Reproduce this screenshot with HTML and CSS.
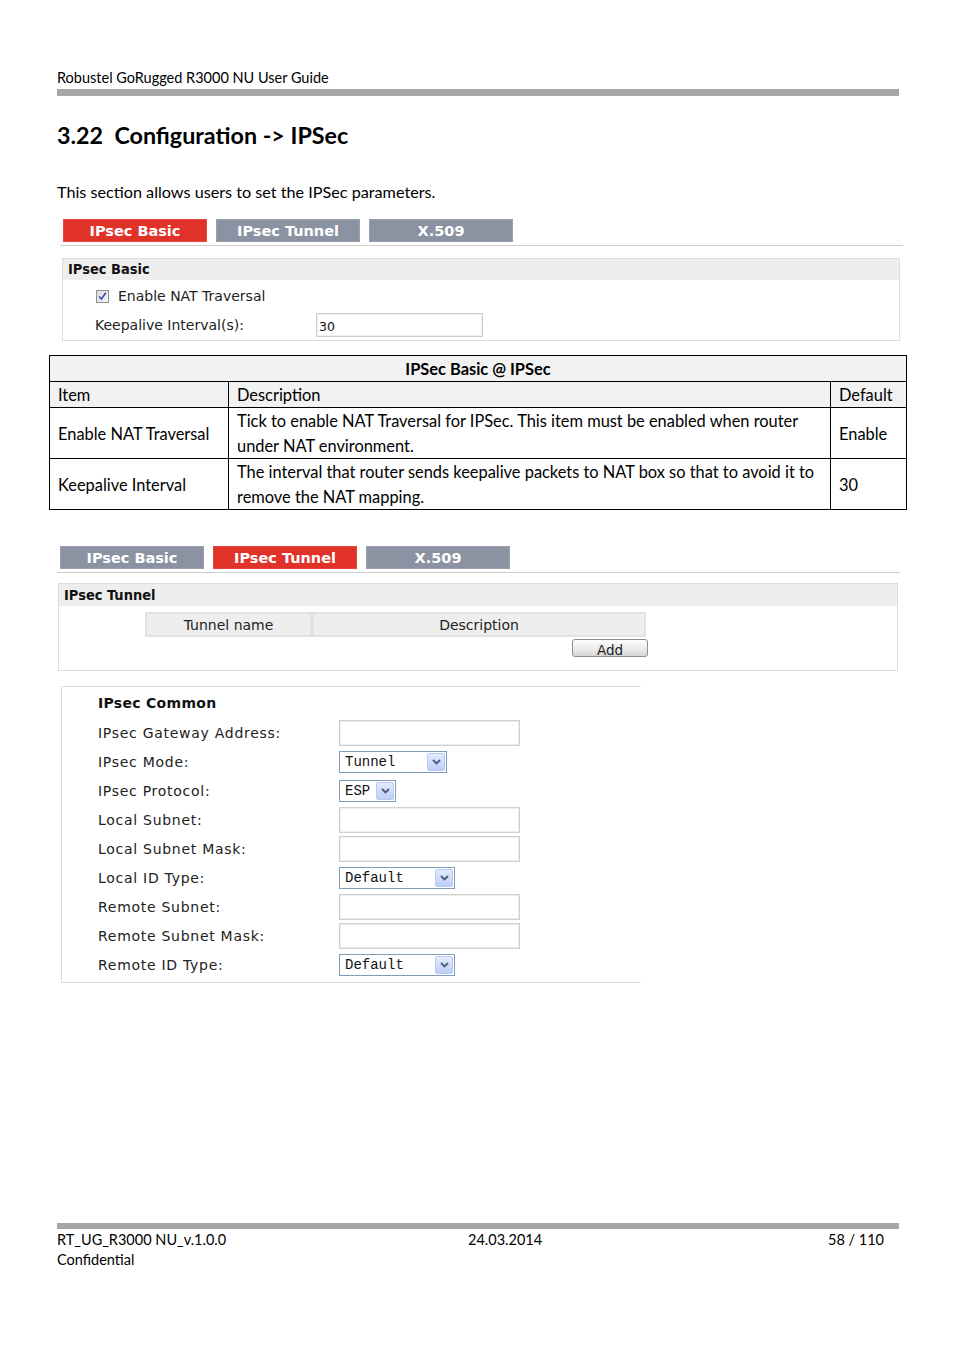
FILE: index.html
```html
<!DOCTYPE html>
<html>
<head>
<meta charset="utf-8">
<title>Configuration -> IPSec</title>
<link rel="stylesheet" href="styles.css">
</head>
<body>
<div class="page">
  <div class="running-head">Robustel GoRugged R3000 NU User Guide</div>
  <div class="rule"></div>
  <h1 class="title">3.22&nbsp;&nbsp;Configuration -&gt; IPSec</h1>
  <p class="intro">This section allows users to set the IPSec parameters.</p>

  <div class="shot shot1">
    <div class="tabs">
      <div class="tab active">IPsec Basic</div>
      <div class="tab">IPsec Tunnel</div>
      <div class="tab">X.509</div>
    </div>
    <div class="tab-line"></div>
    <div class="panel">
      <div class="panel-head">IPsec Basic</div>
      <div class="pb-row check-row">
        <svg class="checkbox" width="13" height="13" viewBox="0 0 13 13">
          <defs>
            <linearGradient id="cbg" x1="0" y1="0" x2="1" y2="1">
              <stop offset="0" stop-color="#d9d9d9"/>
              <stop offset="1" stop-color="#f7f7f7"/>
            </linearGradient>
          </defs>
          <rect x="0.5" y="0.5" width="12" height="12" fill="url(#cbg)" stroke="#8f8f8f"/>
          <path d="M3.2 6.4 L5.4 9 L9.8 2.8" fill="none" stroke="#2f4fb0" stroke-width="1.6"/>
        </svg>
        <span>Enable NAT Traversal</span>
      </div>
      <div class="pb-row keep-row">
        <span class="pb-label">Keepalive Interval(s):</span>
        <span class="text-input value">30</span>
      </div>
    </div>
  </div>

  <table class="spec">
    <colgroup>
      <col class="c1"><col class="c2"><col class="c3">
    </colgroup>
    <tr class="spec-title"><th colspan="3">IPSec Basic @ IPSec</th></tr>
    <tr class="spec-head"><td>Item</td><td>Description</td><td>Default</td></tr>
    <tr class="spec-row"><td>Enable NAT Traversal</td><td>Tick to enable NAT Traversal for IPSec. This item must be enabled when router<br>under NAT environment.</td><td>Enable</td></tr>
    <tr class="spec-row"><td>Keepalive Interval</td><td>The interval that router sends keepalive packets to NAT box so that to avoid it to<br>remove the NAT mapping.</td><td>30</td></tr>
  </table>

  <div class="shot shot2">
    <div class="tabs">
      <div class="tab">IPsec Basic</div>
      <div class="tab active">IPsec Tunnel</div>
      <div class="tab">X.509</div>
    </div>
    <div class="tab-line"></div>
    <div class="panel">
      <div class="panel-head">IPsec Tunnel</div>
      <div class="tunnel-table">
        <div class="tt-cell tt-name">Tunnel name</div>
        <div class="tt-cell tt-desc">Description</div>
      </div>
      <div class="add-row"><span class="add-btn">Add</span></div>
    </div>

    <div class="common">
      <div class="common-head">IPsec Common</div>
      <div class="c-row"><span class="c-label">IPsec Gateway Address:</span><span class="text-input"></span></div>
      <div class="c-row"><span class="c-label">IPsec Mode:</span><span class="sel w-tunnel"><span class="sel-val">Tunnel</span><span class="sel-btn"><svg width="9" height="6" viewBox="0 0 9 6"><path d="M1 1 L4.5 4.5 L8 1" fill="none" stroke="#4a5c80" stroke-width="1.8"/></svg></span></span></div>
      <div class="c-row"><span class="c-label">IPsec Protocol:</span><span class="sel w-esp"><span class="sel-val">ESP</span><span class="sel-btn"><svg width="9" height="6" viewBox="0 0 9 6"><path d="M1 1 L4.5 4.5 L8 1" fill="none" stroke="#4a5c80" stroke-width="1.8"/></svg></span></span></div>
      <div class="c-row"><span class="c-label">Local Subnet:</span><span class="text-input"></span></div>
      <div class="c-row"><span class="c-label">Local Subnet Mask:</span><span class="text-input"></span></div>
      <div class="c-row"><span class="c-label">Local ID Type:</span><span class="sel w-default"><span class="sel-val">Default</span><span class="sel-btn"><svg width="9" height="6" viewBox="0 0 9 6"><path d="M1 1 L4.5 4.5 L8 1" fill="none" stroke="#4a5c80" stroke-width="1.8"/></svg></span></span></div>
      <div class="c-row"><span class="c-label">Remote Subnet:</span><span class="text-input"></span></div>
      <div class="c-row"><span class="c-label">Remote Subnet Mask:</span><span class="text-input"></span></div>
      <div class="c-row"><span class="c-label">Remote ID Type:</span><span class="sel w-default"><span class="sel-val">Default</span><span class="sel-btn"><svg width="9" height="6" viewBox="0 0 9 6"><path d="M1 1 L4.5 4.5 L8 1" fill="none" stroke="#4a5c80" stroke-width="1.8"/></svg></span></span></div>
    </div>
  </div>

  <div class="footer">
    <div class="rule"></div>
    <div class="foot-grid">
      <span>RT_UG_R3000 NU_v.1.0.0</span>
      <span>24.03.2014</span>
      <span class="page-no">58 / 110</span>
      <span>Confidential</span>
    </div>
  </div>
</div>
</body>
</html>
```

FILE: styles.css
```css
* { box-sizing: border-box; }

body {
  margin: 0;
  background: #ffffff;
  color: #000000;
  font-family: Lato, "Liberation Sans", sans-serif;
}

.page {
  width: 954px;
  height: 1350px;
  padding: 0 55px 0 57px;
  display: flex;
  flex-direction: column;
}

.running-head {
  margin-top: 69px;
  font-size: 14.5px;
  line-height: 18px;
}

.rule {
  height: 7px;
  background: #a6a6a6;
  margin-top: 2px;
}

.title {
  margin: 24px 0 0;
  font-size: 23.3px;
  line-height: 30px;
  font-weight: 700;
}

.intro {
  margin: 32px 0 0;
  font-size: 16.2px;
  line-height: 20px;
}

/* ---------- UI screenshots ---------- */
.shot {
  font-family: "DejaVu Sans", Verdana, sans-serif;
  color: #111;
}

.shot1 { margin-top: 17px; }

.tabs {
  display: flex;
  gap: 9px;
  margin-left: 6px;
}

.shot2 .tabs { margin-left: 3px; gap: 9px; }

.tab {
  width: 144px;
  height: 23px;
  line-height: 22px;
  text-align: center;
  background: #8b93a3;
  color: #ffffff;
  font-weight: 700;
  font-size: 14.5px;
  border: 1px solid #9aa1ae;
}

.tab.active {
  background: #e1322a;
  border-color: #e8473f;
}

.tab-line {
  height: 1px;
  background: #cccccc;
  margin: 3px -4px 0 3px;
}

.shot2 .tab-line { margin: 3px -1px 0 0; }

.panel {
  margin: 12px -1px 0 5px;
  border: 1px solid #dddddd;
}

.shot2 .panel { margin: 10px 1px 0 1px; }

.panel-head {
  background: #eeeeee;
  height: 21px;
  line-height: 21px;
  padding-left: 5px;
  font-family: "DejaVu Sans Condensed", "DejaVu Sans", sans-serif;
  font-weight: 700;
  font-size: 14.5px;
  color: #111;
}

.shot2 .panel-head { height: 22px; line-height: 22px; }

.pb-row {
  display: flex;
  align-items: center;
  padding-left: 32px;
  font-size: 14px;
  color: #222;
}

.check-row { padding-left: 33px; height: 32px; }
.check-row span { margin-left: 9px; }

.keep-row { height: 26px; margin-bottom: 2px; }

.pb-label { width: 221px; }

.text-input {
  display: inline-block;
  width: 167px;
  height: 24px;
  border: 1px solid #cfcfcf;
  box-shadow: inset 0 0 0 1px #eeeeee;
  background: #fff;
}

.text-input.value {
  font-size: 12.5px;
  line-height: 24px;
  padding-left: 2px;
  padding-top: 1px;
  color: #111;
}

/* ---------- spec table ---------- */
.spec {
  margin: 14px 0 0 -8px;
  width: 857px;
  border-collapse: collapse;
  font-family: Lato, "Liberation Sans", sans-serif;
  font-size: 16.4px;
  table-layout: fixed;
}

.spec .c1 { width: 179px; }
.spec .c2 { width: 602px; }
.spec .c3 { width: 76px; }

.spec th,
.spec td {
  border: 1px solid #000;
  padding: 0 8px;
  text-align: left;
  vertical-align: middle;
  white-space: nowrap;
}

.spec-title th {
  background: #f2f2f2;
  text-align: center;
  font-weight: 700;
  height: 26px;
}

.spec-head td {
  background: #f2f2f2;
  height: 26px;
}

.spec-row td {
  height: 51px;
  line-height: 25px;
}

/* ---------- tunnel ---------- */
.shot2 { margin-top: 36px; }

.tunnel-table {
  display: flex;
  margin: 6px 0 0 86px;
}

.tt-cell {
  height: 25px;
  line-height: 23px;
  text-align: center;
  background: #eeeeee;
  border: 2px solid #e2e2e2;
  font-size: 14px;
  color: #222;
}

.tt-name { width: 167px; }
.tt-desc { width: 334px; }

.add-row {
  display: flex;
  margin: 2px 0 0 513px;
  height: 31px;
}

.add-btn {
  width: 76px;
  height: 18px;
  border: 1px solid #8d8d8d;
  border-radius: 3px;
  background: linear-gradient(#fdfdfd, #e9e9e9 60%, #d6d6d6);
  font-size: 13.5px;
  line-height: 20px;
  text-align: center;
  overflow: hidden;
  color: #222;
}

/* ---------- common ---------- */
.common {
  margin: 15px 0 0 4px;
  width: 580px;
  border-top: 1px solid #dcdcdc;
  border-left: 1px solid #dcdcdc;
  border-bottom: 1px solid #dcdcdc;
  padding: 2px 0 3px 36px;
}

.common-head {
  height: 29px;
  line-height: 29px;
  font-weight: 700;
  font-size: 14px;
  letter-spacing: 0.3px;
  color: #111;
}

.c-row {
  height: 29px;
  display: flex;
  align-items: center;
  font-size: 14px;
  letter-spacing: 0.72px;
  color: #222;
}

.c-label { width: 241px; }

.common .text-input {
  width: 181px;
  height: 26px;
}

.sel {
  display: inline-flex;
  align-items: center;
  justify-content: space-between;
  height: 22px;
  border: 1px solid #7f9db9;
  background: #fff;
  padding-left: 5px;
  padding-right: 1px;
  letter-spacing: 0;
}

.w-tunnel { width: 108px; }
.w-esp { width: 57px; }
.w-default { width: 116px; }

.sel-val {
  font-family: "Liberation Mono", "DejaVu Sans Mono", monospace;
  font-size: 14px;
  color: #111;
}

.sel-btn {
  width: 18px;
  height: 18px;
  border: 1px solid #b8caf2;
  border-radius: 2px;
  background: linear-gradient(#e3ebfd, #bccff7);
  display: flex;
  align-items: center;
  justify-content: center;
}

/* ---------- footer ---------- */
.footer {
  margin-top: auto;
  margin-bottom: 80px;
}

.footer .rule { margin: 0; height: 6px; }

.foot-grid {
  display: grid;
  grid-template-columns: 411px 1fr auto;
  padding-right: 15px;
  font-size: 14.5px;
  line-height: 20px;
  margin-top: 1px;
}

.page-no { text-align: right; }
```
